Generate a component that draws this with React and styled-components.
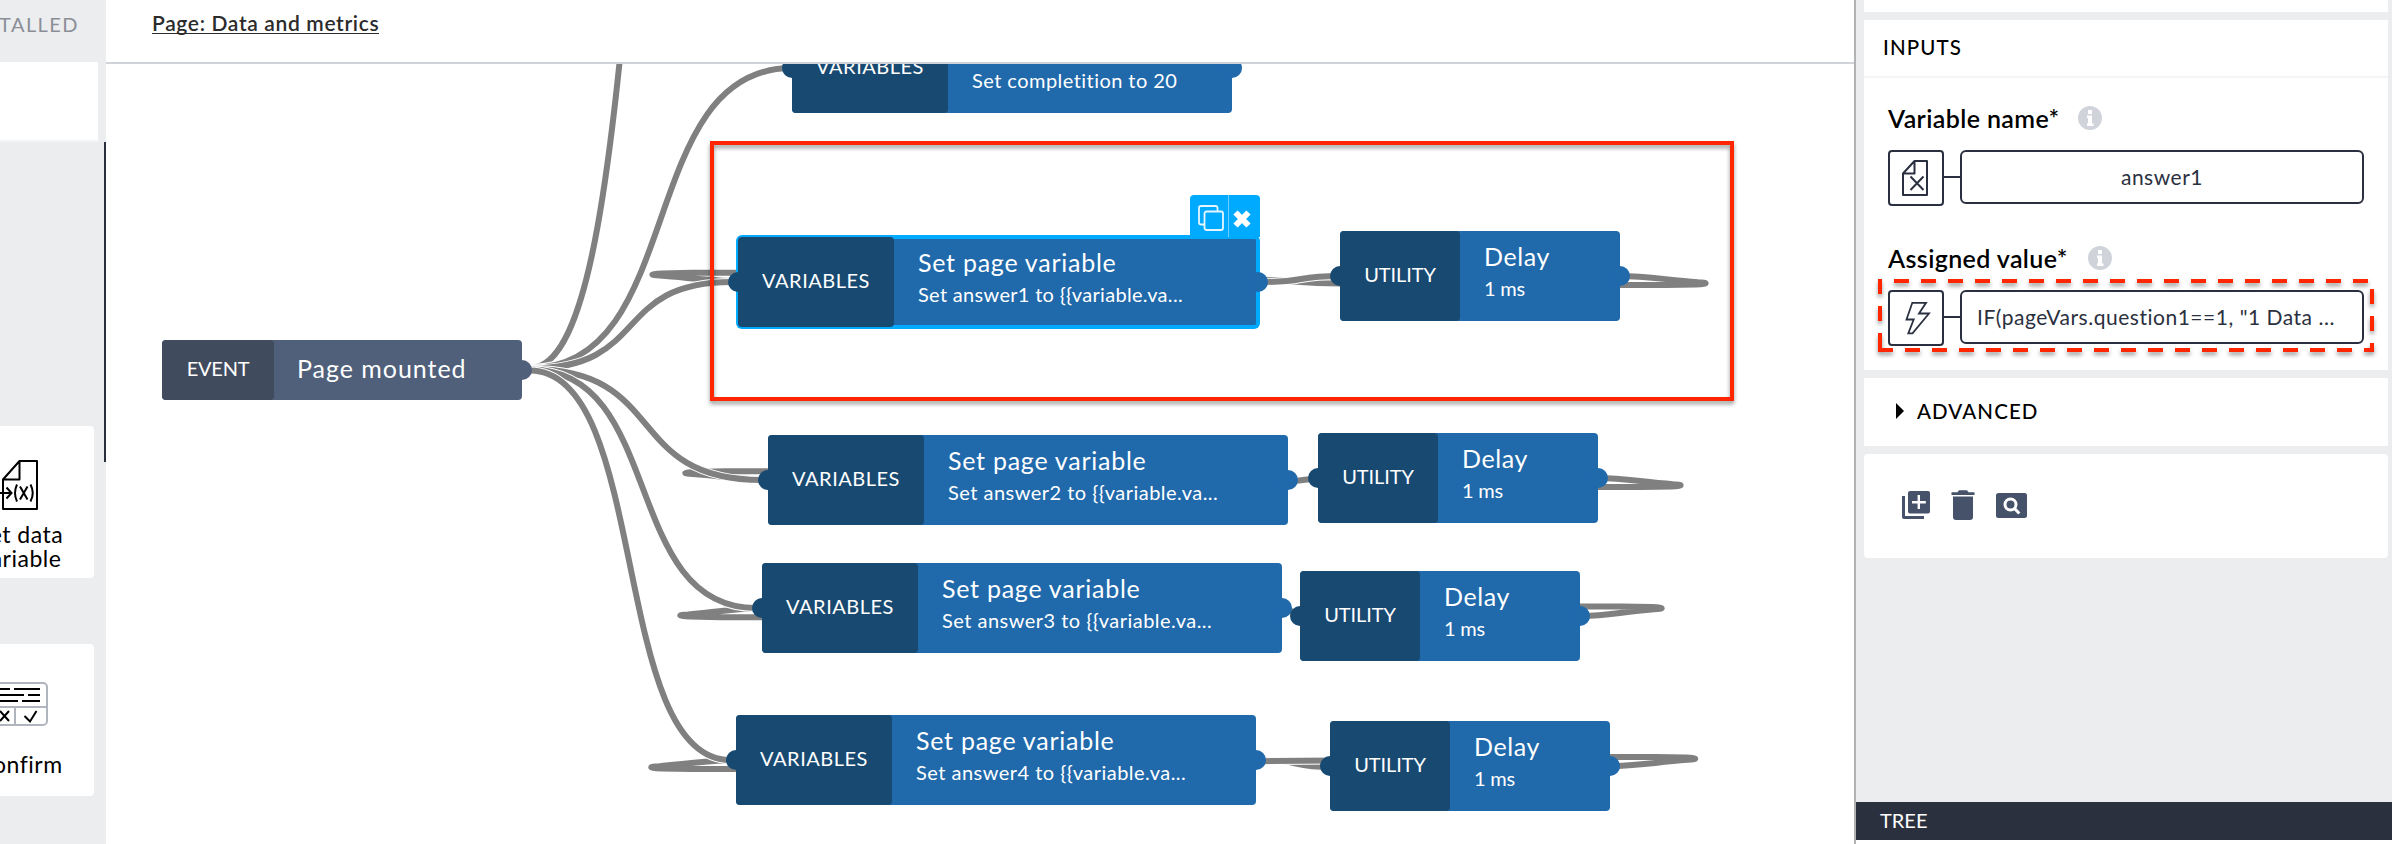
import React from "react";
import styled, { createGlobalStyle, css } from "styled-components";

const GlobalStyle = createGlobalStyle`
  *, *::before, *::after { box-sizing: border-box; }
  body {
    margin: 0;
    font-family: Lato, "Open Sans", sans-serif;
    background: #fff;
    color: #000;
  }
`;

const font = (size, line, spacing = 0, weight = 400) => css`
  font-size: ${size}px;
  line-height: ${line}px;
  letter-spacing: ${spacing}px;
  font-weight: ${weight};
  white-space: nowrap;
`;

/* ---------- shell ---------- */

const Shell = styled.div`
  position: relative;
  display: grid;
  grid-template-columns: 106px 1fr 538px;
  width: 2392px;
  height: 844px;
  overflow: hidden;
`;

/* ---------- left sidebar ---------- */

const Sidebar = styled.aside`
  position: relative;
  display: flex;
  flex-direction: column;
  align-items: flex-end;
  overflow: hidden;
  background: #ecedef;
`;

const SidebarTab = styled.div`
  flex: none;
  height: 62px;
  padding: 12px 27px 0 0;
  color: #8b8e97;
  ${font(20, 24, 1.45)}
`;

const SidebarSearch = styled.div`
  flex: none;
  width: 140px;
  height: 80px;
  margin: 0 8px 284px 0;
  background: #fff;
  border-bottom: 2px solid #f4f5f6;
`;

const Tile = styled.div`
  flex: none;
  display: flex;
  flex-direction: column;
  align-items: center;
  justify-content: space-between;
  width: 152px;
  height: 152px;
  margin: 0 12px 66px 0;
  padding: ${(p) => p.$pad};
  background: #fff;
  border-radius: 4px;
`;

const TileLabel = styled.div`
  padding-left: 4px;
  text-align: center;
  ${font(23, 24, 0.5)}
  white-space: pre;
`;

const ScrollThumb = styled.div`
  position: absolute;
  top: 142px;
  right: 0;
  width: 2px;
  height: 320px;
  background: #2b303f;
`;

/* ---------- centre ---------- */

const Main = styled.main`
  display: flex;
  flex-direction: column;
  min-width: 0;
`;

const TopBar = styled.header`
  flex: none;
  height: 64px;
  padding: 12px 0 0 46px;
  border-bottom: 2px solid #d0d4d8;
`;

const PageLink = styled.a`
  display: inline-block;
  color: #2b2b2b;
  ${font(21, 22, 0.65, 600)}
  height: 22px;
  border-bottom: 1px solid #2b2b2b;
`;

const Canvas = styled.section`
  position: relative;
  flex: 1;
  overflow: hidden;
`;

/* Coordinates on the stage are window coordinates */
const Stage = styled.div`
  position: absolute;
  left: -106px;
  top: -64px;
  width: 2392px;
  height: 844px;
`;

const Wires = styled.svg`
  position: absolute;
  inset: 0;
  fill: none;
  stroke-width: 6;
  stroke: #808080;
`;

const tones = {
  event: { tag: "#414b5e", body: "#50607a" },
  action: { tag: "#184971", body: "#2069ab" },
};

const NodeBox = styled.div`
  position: absolute;
  left: ${(p) => p.$x}px;
  top: ${(p) => p.$y}px;
  width: ${(p) => p.$w}px;
  height: ${(p) => p.$h}px;
  display: flex;
  border-radius: 4px;
  background: ${(p) => tones[p.$tone].body};
  ${(p) =>
    p.$selected &&
    css`
      box-shadow: inset 0 2px 0 #00aaff, inset 0 -2px 0 #00aaff,
        inset -2px 0 0 #00aaff, 0 0 0 2px #00aaff;
    `}
`;

const NodeTag = styled.div`
  flex: none;
  display: flex;
  align-items: center;
  justify-content: center;
  width: ${(p) => p.$w}px;
  padding-bottom: 4px;
  border-radius: 4px;
  background: ${(p) => tones[p.$tone].tag};
  color: #fff;
  ${(p) => font(20, 24, p.$ls)}
`;

const NodeBody = styled.div`
  flex: 1;
  display: flex;
  flex-direction: column;
  justify-content: center;
  gap: 4px;
  padding: 0 0 ${(p) => (p.$single ? 5 : 11)}px ${(p) => (p.$single ? 23 : 24)}px;
  color: #fff;
`;

const NodeTitle = styled.div`
  ${(p) => font(25, 30, p.$ls)}
`;

const NodeText = styled.div`
  ${(p) => font(20, 26, p.$ls)}
`;

const Port = styled.i`
  position: absolute;
  top: 50%;
  width: 20px;
  height: 20px;
  margin-top: -10px;
  border-radius: 50%;
  background: ${(p) => p.$color};
  ${(p) => (p.$side === "in" ? "left: -10px;" : "right: -10px;")}
`;

const NodeActions = styled.div`
  position: absolute;
  right: -2px;
  bottom: 100%;
  display: grid;
  grid-template-columns: 38px 32px;
  height: 42px;
  border-radius: 4px 4px 0 0;
  background: #00aaff;
`;

const NodeAction = styled.button`
  display: flex;
  padding: ${(p) => p.$pad};
  border: 0;
  background: none;
  & + & {
    border-left: 1px solid #6fcdff;
  }
`;

const Highlight = styled.div`
  position: absolute;
  left: 710px;
  top: 141px;
  width: 1024px;
  height: 260px;
  border: 4px solid #ff2600;
  filter: drop-shadow(0 3px 2px rgba(0, 0, 0, 0.4));
`;

/* ---------- right panel ---------- */

const Panel = styled.aside`
  display: flex;
  flex-direction: column;
  border-left: 2px solid #b1b2b4;
  background: #ecedef;
`;

const PanelStack = styled.div`
  flex: 1;
  display: flex;
  flex-direction: column;
  gap: 8px;
  padding: 0 4px 0 8px;
`;

const Card = styled.section`
  flex: none;
  height: ${(p) => p.$h}px;
  background: #fff;
  border-radius: ${(p) => (p.$round ? 4 : 0)}px;
`;

const CardHeader = styled.h2`
  margin: 0;
  height: 58px;
  padding: 15px 0 0 19px;
  border-bottom: 2px solid #f4f5f6;
  ${font(20.5, 24, 1.1, 500)}
`;

const Fields = styled.div`
  display: flex;
  flex-direction: column;
  gap: 37px;
  padding: 25px 24px 0;
`;

const Field = styled.div`
  display: flex;
  flex-direction: column;
  gap: 17px;
`;

const FieldLabel = styled.label`
  display: flex;
  align-items: center;
  gap: ${(p) => p.$gap}px;
  height: 30px;
  ${font(25, 30, 0.38, 600)}
`;

const InfoDot = styled.span`
  display: flex;
  width: 24px;
  height: 24px;
`;

const FieldRow = styled.div`
  display: flex;
  height: 56px;
`;

const Binding = styled.div`
  width: 56px;
  height: 56px;
  border: 2px solid #2b3040;
  border-radius: 4px;
`;

const Link = styled.div`
  width: 16px;
  height: 2px;
  margin-top: 26px;
  background: #2b3040;
`;

const Value = styled.div`
  display: flex;
  align-items: center;
  justify-content: ${(p) => (p.$clipped ? "flex-start" : "center")};
  width: 404px;
  height: 54px;
  padding: 0 0 1px ${(p) => (p.$clipped ? 15 : 0)}px;
  border: 2px solid #2b3040;
  border-radius: 6px;
  color: #2b3040;
  ${font(21, 26, 0.52)}
`;

const AdvancedRow = styled.div`
  display: flex;
  align-items: center;
  gap: 13px;
  height: 68px;
  padding: 0 0 3px 32px;
  ${font(20.5, 24, 1.1, 500)}
`;

const Caret = styled.i`
  border: solid transparent;
  border-width: 8px 0 8px 8px;
  border-left-color: #000;
`;

const Tools = styled.div`
  display: flex;
  align-items: center;
  gap: 21px;
  padding: 36px 0 0 38px;
`;

const TreeBar = styled.footer`
  height: 38px;
  margin-bottom: 4px;
  padding: 6px 0 0 24px;
  background: #2b303e;
  box-shadow: 0 4px 0 #fff;
  color: #fff;
  ${font(20, 24, 0)}
`;

const FocusDashes = styled.svg`
  position: absolute;
  left: 1870px;
  top: 270px;
  filter: drop-shadow(0 3px 2px rgba(0, 0, 0, 0.4));
`;

/* ---------- drawings ---------- */

const Info = () => (
  <InfoDot>
    <svg width="24" height="24" viewBox="0 0 24 24">
      <circle cx="12" cy="12" r="12" fill="#d0d4da" />
      <path d="M10 4h4v4h-4z M9 9.500h5v8h1.500v2.500h-6.500v-2.500h1v-5.500h-1z" fill="#fff" />
    </svg>
  </InfoDot>
);

const VariableFileIcon = () => (
  <svg width="58" height="52" viewBox="-11 459 58 52" fill="none" stroke="#000" strokeWidth="2">
    <path d="M3 479.500 19.500 461H37v48H3zM3 479.500H19.500V461" strokeLinejoin="round" />
    <path d="M-5 493H11M6.500 487.500 11.500 493 6.500 498.500" />
    <path d="M17 484.500Q13 493 17 501.500M30.500 484.500Q35 493 30.500 501.500M20 486.500 27.500 499.500M27.500 486.500 20 499.500" />
  </svg>
);

const ConfirmIcon = () => (
  <svg width="60" height="44" viewBox="0 0 60 44" fill="none">
    <rect x="1" y="1" width="58" height="42" rx="4" stroke="#b0b4bc" strokeWidth="2" />
    <path d="M1 25H59M27 25V43" stroke="#b0b4bc" strokeWidth="2" />
    <path
      d="M8 7H22M26 7H52M8 13H36M40 13H52M8 19H30M34 19H52M12 29 21 39M21 29 12 39M36.500 34 42 39.500 48.500 29"
      stroke="#000"
      strokeWidth="2"
    />
  </svg>
);

const CopyIcon = () => (
  <svg width="26" height="26" viewBox="0 0 26 26" fill="none" stroke="#e6f6ff" strokeWidth="1.800">
    <path d="M6.500 19.500H3Q1 19.500 1 17.500V3Q1 1 3 1H17.500Q19.500 1 19.500 3V6" />
    <rect x="6.500" y="6.500" width="18.500" height="18.500" rx="2" />
  </svg>
);

const CloseIcon = () => (
  <svg width="18" height="18" viewBox="0 0 18 18" stroke="#fff" strokeWidth="6">
    <path d="M2.500 2.500 15.500 15.500M15.500 2.500 2.500 15.500" />
  </svg>
);

const FileXIcon = () => (
  <svg width="52" height="52" viewBox="2 2 52 52" fill="none" stroke="#2b3040" strokeWidth="2">
    <path d="M15 23.500 26.500 11H39V45H15zM15 23.500H26.500V11" strokeLinejoin="round" />
    <path d="M22.500 26.500 35.500 40M35.500 26.500 22.500 40" />
  </svg>
);

const BoltIcon = () => (
  <svg width="52" height="52" viewBox="2 2 52 52" fill="none" stroke="#2b3040" strokeWidth="1.800">
    <path d="M24.300 12.800H38L31 23.500H41L24.500 43.300H20.300L25.700 29.500H18.500z" />
  </svg>
);

const ToolIcon = styled.svg`
  display: block;
  fill: #465269;
`;

const AddIcon = () => (
  <ToolIcon width="28" height="28" viewBox="0 0 28 28">
    <path d="M0 5H3V25H22V28H2Q0 28 0 26z" />
    <path
      fillRule="evenodd"
      d="M8 0H26Q28 0 28 2V20.500Q28 22.500 26 22.500H8Q6 22.500 6 20.500V2Q6 0 8 0zM15.600 4V10H10V12.500H15.600V18H18V12.500H23.800V10H18V4z"
    />
  </ToolIcon>
);

const TrashIcon = () => (
  <ToolIcon width="24" height="30" viewBox="0 0 24 30">
    <path d="M.5 2.200H6.500L8 .3H16L17.500 2.200H23.500V5H.5zM2 6.600H22V27Q22 30 19 30H5Q2 30 2 27z" />
  </ToolIcon>
);

const PreviewIcon = () => (
  <ToolIcon width="31" height="25" viewBox="0 0 31 25">
    <rect width="31" height="25" rx="2.500" />
    <circle cx="14.500" cy="11.500" r="5.500" fill="none" stroke="#fff" strokeWidth="3" />
    <path d="M18.300 15.300 23.300 20.500" stroke="#fff" strokeWidth="3" />
  </ToolIcon>
);

/* ---------- flow ---------- */

const curve = (x1, y1, x2, y2, k = 0.6) => {
  const h = (x2 - x1) * k;
  return `M${x1} ${y1}C${x1 + h} ${y1} ${x2 - h} ${y2} ${x2} ${y2}`;
};

/* A wire that leaves a port, folds back at `tip` and runs on to (lx, ly) */
const hairpin = (px, py, tip, lx, ly) => {
  const d = Math.sign(px - tip);
  const s = Math.sign(py - ly);
  return (
    `M${px} ${py}C${px - d * 25} ${py} ${tip + d * 42} ${ly + s * 5.5} ${tip + d * 8} ${ly + s * 2.8}` +
    `C${tip - d * 2.5} ${ly + s * 2.2} ${tip - d * 2.5} ${ly + s * 1} ${tip + d * 10} ${ly + s * 0.6}` +
    `L${tip + d * 40} ${ly}L${lx} ${ly}`
  );
};

const wires = [
  // return loops running behind the nodes
  hairpin(738, 281, 652, 742, 272.8),
  hairpin(1620, 276, 1706, 1616, 285),
  "M1266 280C1290 280 1300 283.500 1340 283.500",
  hairpin(768, 479.5, 685, 772, 471.3),
  hairpin(1598, 478, 1681, 1590, 487),
  "M1290 480H1318",
  hairpin(762, 608, 680, 766, 617.2),
  hairpin(1582, 616, 1662, 1575, 606.5),
  // event to each action, then action to delay
  curve(530, 368, 730, -450),
  curve(530, 368, 792, 68),
  curve(530, 368.5, 732, 282),
  curve(1262, 282, 1340, 276),
  curve(530, 369, 762, 480),
  curve(1284, 481, 1322, 479),
  curve(530, 369.5, 756, 608),
  curve(1284, 608, 1300, 616),
  curve(1260, 760, 1332, 767),
  hairpin(736, 760, 651, 740, 769),
  curve(530, 370.5, 730, 760),
  hairpin(1610, 766, 1695.5, 1606, 757),
  "M1262 761.200L1335 760.400",
];

const setVariable = (x, y, w, text, ls, selected) => ({
  x, y, w, h: 90, tone: "action", tag: "VARIABLES", tagW: 156, tagLs: 0.5,
  title: "Set page variable", titleLs: 0.74, text, textLs: ls, selected, input: true,
});

const delay = (x, y) => ({
  x, y, w: 280, h: 90, tone: "action", tag: "UTILITY", tagW: 120, tagLs: -0.1,
  title: "Delay", titleLs: 0.6, text: "1 ms", textLs: -0.2, input: true,
});

const nodes = [
  { x: 162, y: 340, w: 360, h: 60, tone: "event", tag: "EVENT", tagW: 112, tagLs: -0.2, title: "Page mounted", titleLs: 0.96 },
  setVariable(792, 23, 440, "Set completition to 20", 0.45),
  setVariable(738, 237, 520, "Set answer1 to {{variable.va...", 0.31, true),
  delay(1340, 231),
  setVariable(768, 435, 520, "Set answer2 to {{variable.va...", 0.48),
  delay(1318, 433),
  setVariable(762, 563, 520, "Set answer3 to {{variable.va...", 0.48),
  delay(1300, 571),
  setVariable(736, 715, 520, "Set answer4 to {{variable.va...", 0.48),
  delay(1330, 721),
];

const Node = ({ n }) => (
  <NodeBox $x={n.x} $y={n.y} $w={n.w} $h={n.h} $tone={n.tone} $selected={n.selected}>
    {n.selected && (
      <NodeActions>
        <NodeAction $pad="10px 0 0 8px"><CopyIcon /></NodeAction>
        <NodeAction $pad="15px 0 0 4px"><CloseIcon /></NodeAction>
      </NodeActions>
    )}
    {n.input && <Port $side="in" $color={tones[n.tone].tag} />}
    <Port $side="out" $color={tones[n.tone].body} />
    <NodeTag $w={n.tagW} $tone={n.tone} $ls={n.tagLs}>{n.tag}</NodeTag>
    <NodeBody $single={!n.text}>
      <NodeTitle $ls={n.titleLs}>{n.title}</NodeTitle>
      {n.text && <NodeText $ls={n.textLs}>{n.text}</NodeText>}
    </NodeBody>
  </NodeBox>
);

export default function App() {
  return (
    <>
      <GlobalStyle />
      <Shell>
        <Sidebar>
          <SidebarTab>INSTALLED</SidebarTab>
          <SidebarSearch />
          <Tile $pad="33px 0 8px">
            <VariableFileIcon />
            <TileLabel>{"Set data\nvariable"}</TileLabel>
          </Tile>
          <Tile $pad="38px 0 20px">
            <ConfirmIcon />
            <TileLabel>Confirm</TileLabel>
          </Tile>
          <ScrollThumb />
        </Sidebar>

        <Main>
          <TopBar>
            <PageLink>Page: Data and metrics</PageLink>
          </TopBar>
          <Canvas>
            <Stage>
              <Wires width="2392" height="844">
                {wires.map((d) => (
                  <g key={d}>
                    <path d={d} stroke="#fff" strokeWidth="8" />
                    <path d={d} />
                  </g>
                ))}
              </Wires>
              {nodes.map((n) => (
                <Node key={`${n.x}-${n.y}`} n={n} />
              ))}
              <Highlight />
            </Stage>
          </Canvas>
        </Main>

        <Panel>
          <PanelStack>
            <Card $h={12} />
            <Card $h={350}>
              <CardHeader>INPUTS</CardHeader>
              <Fields>
                <Field>
                  <FieldLabel $gap={19}>Variable name*<Info /></FieldLabel>
                  <FieldRow>
                    <Binding><FileXIcon /></Binding>
                    <Link />
                    <Value>answer1</Value>
                  </FieldRow>
                </Field>
                <Field>
                  <FieldLabel $gap={20}>Assigned value*<Info /></FieldLabel>
                  <FieldRow>
                    <Binding><BoltIcon /></Binding>
                    <Link />
                    <Value $clipped>IF(pageVars.question1==1, "1 Data ...</Value>
                  </FieldRow>
                </Field>
              </Fields>
            </Card>
            <Card $h={68}>
              <AdvancedRow><Caret />ADVANCED</AdvancedRow>
            </Card>
            <Card $h={104} $round>
              <Tools>
                <AddIcon />
                <TrashIcon />
                <PreviewIcon />
              </Tools>
            </Card>
          </PanelStack>
          <TreeBar>TREE</TreeBar>
        </Panel>

        <FocusDashes width="520" height="90" viewBox="1870 270 520 90" fill="none">
          <path d="M1878 350H2372V281H1880V350" stroke="#ff2600" strokeWidth="4" strokeDasharray="15 12" />
        </FocusDashes>
      </Shell>
    </>
  );
}
